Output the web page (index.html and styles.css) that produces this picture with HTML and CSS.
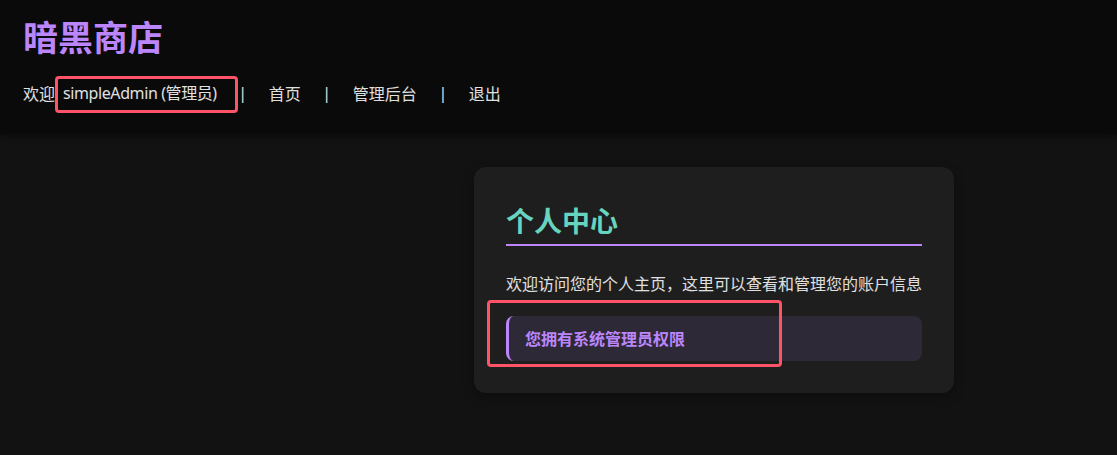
FILE: index.html
```html
<!DOCTYPE html>
<html lang="zh-CN">
<head>
<meta charset="utf-8">
<title>暗黑商店</title>
<link rel="stylesheet" href="styles.css">
</head>
<body>
<header class="site-header">
  <h1 class="brand">暗黑商店</h1>
  <nav class="nav">
    <span class="nav-text">欢迎</span>
    <span class="nav-user">simpleAdmin (管理员)</span>
    <span class="nav-sep">|</span>
    <a class="nav-link" href="#">首页</a>
    <span class="nav-sep">|</span>
    <a class="nav-link" href="#">管理后台</a>
    <span class="nav-sep">|</span>
    <a class="nav-link" href="#">退出</a>
  </nav>
</header>
<main class="main">
  <section class="card">
    <h2 class="card-title">个人中心</h2>
    <p class="card-text">欢迎访问您的个人主页，这里可以查看和管理您的账户信息</p>
    <div class="admin-note">您拥有系统管理员权限</div>
  </section>
</main>
<div class="mark mark-user"></div>
<div class="mark mark-admin"></div>
</body>
</html>
```
FILE: styles.css
```css
html, body {
  margin: 0;
  padding: 0;
}
body {
  background: #121212;
  color: #e0e0e0;
  font-family: "Noto Sans", "Noto Sans CJK SC", sans-serif;
  font-size: 16px;
  min-height: 455px;
  position: relative;
}
.site-header {
  background: #0a0a0a;
  padding: 14px 23px 29px;
  box-shadow: 0 2px 6px rgba(0,0,0,0.4);
}
.brand {
  margin: 0;
  font-size: 35px;
  line-height: 44px;
  font-weight: 700;
  color: #bb86fc;
  font-family: "Noto Sans CJK SC", sans-serif;
}
.nav {
  margin-top: 23px;
  display: flex;
  align-items: center;
  line-height: 24px;
  color: #e0e0e0;
}
.nav-text, .nav-link {
  font-family: "Noto Sans CJK SC", sans-serif;
}
.nav-user {
  margin-left: 8px;
  letter-spacing: -0.4px;
}
.nav-link {
  color: #e0e0e0;
  text-decoration: none;
}
.nav-sep {
  width: 52px;
  text-align: center;
}
.main {
  padding: 33px 0 40px 474px;
}
.card {
  width: 416px;
  padding: 32px;
  background: #1e1e1e;
  border-radius: 12px;
  box-shadow: 0 4px 12px rgba(0,0,0,0.3);
}
.card-title {
  margin: 0;
  font-size: 28px;
  line-height: 42px;
  padding-bottom: 3px;
  font-weight: 700;
  color: #66d4bf;
  border-bottom: 2px solid #bb86fc;
  font-family: "Noto Sans CJK SC", sans-serif;
}
.card-text {
  margin: 25px 0 21px;
  line-height: 24px;
  font-family: "Noto Sans CJK SC", sans-serif;
  white-space: nowrap;
}
.admin-note {
  background: #2e2936;
  border-left: 3px solid #bb86fc;
  border-radius: 8px;
  padding: 12px 16px;
  line-height: 21px;
  font-weight: 700;
  color: #bb86fc;
  font-family: "Noto Sans CJK SC", sans-serif;
}
.mark {
  position: absolute;
  border: 3px solid #ff5468;
  border-radius: 4px;
  box-sizing: border-box;
}
.mark-user {
  left: 55px;
  top: 76px;
  width: 183px;
  height: 37px;
}
.mark-admin {
  left: 487px;
  top: 300px;
  width: 295px;
  height: 67px;
}
```
